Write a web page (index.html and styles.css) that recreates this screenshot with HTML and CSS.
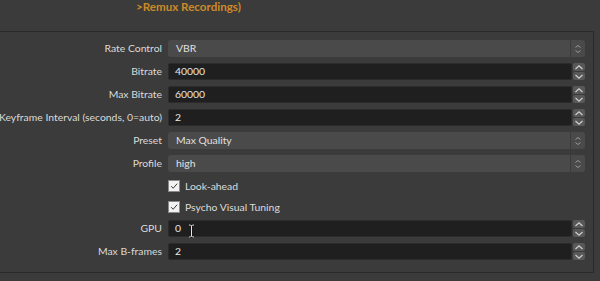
FILE: index.html
```html
<!DOCTYPE html>
<html>
<head>
<meta charset="utf-8">
<link rel="stylesheet" href="styles.css">
</head>
<body>
<div class="header"><span class="title">&gt;Remux Recordings)</span></div>
<div class="group">
  <div class="form">
    <div class="label"><span>Rate Control</span></div>
    <div class="combo"><div class="combo-text">VBR</div><div class="combo-btn"><svg width="8" height="10" viewBox="0 0 8 10"><path d="M1.5 3.5 L4 1.5 L6.5 3.5 M1.5 6.5 L4 8.5 L6.5 6.5" fill="none" stroke="#9a9a9a" stroke-width="1"/></svg></div></div>

    <div class="label"><span>Bitrate</span></div>
    <div class="spin"><div class="spin-text">40000</div><div class="spin-btns"><div class="sb"><svg width="10" height="7" viewBox="0 0 10 7"><path d="M1.5 5 L5 1.8 L8.5 5" fill="none" stroke="#d0d0d0" stroke-width="1.2"/></svg></div><div class="sb"><svg width="10" height="7" viewBox="0 0 10 7"><path d="M1.5 2 L5 5.2 L8.5 2" fill="none" stroke="#d0d0d0" stroke-width="1.2"/></svg></div></div></div>

    <div class="label"><span>Max Bitrate</span></div>
    <div class="spin"><div class="spin-text">60000</div><div class="spin-btns"><div class="sb"><svg width="10" height="7" viewBox="0 0 10 7"><path d="M1.5 5 L5 1.8 L8.5 5" fill="none" stroke="#d0d0d0" stroke-width="1.2"/></svg></div><div class="sb"><svg width="10" height="7" viewBox="0 0 10 7"><path d="M1.5 2 L5 5.2 L8.5 2" fill="none" stroke="#d0d0d0" stroke-width="1.2"/></svg></div></div></div>

    <div class="label"><span>Keyframe Interval (seconds, 0=auto)</span></div>
    <div class="spin"><div class="spin-text">2</div><div class="spin-btns"><div class="sb"><svg width="10" height="7" viewBox="0 0 10 7"><path d="M1.5 5 L5 1.8 L8.5 5" fill="none" stroke="#d0d0d0" stroke-width="1.2"/></svg></div><div class="sb"><svg width="10" height="7" viewBox="0 0 10 7"><path d="M1.5 2 L5 5.2 L8.5 2" fill="none" stroke="#d0d0d0" stroke-width="1.2"/></svg></div></div></div>

    <div class="label"><span>Preset</span></div>
    <div class="combo"><div class="combo-text">Max Quality</div><div class="combo-btn"><svg width="8" height="10" viewBox="0 0 8 10"><path d="M1.5 3.5 L4 1.5 L6.5 3.5 M1.5 6.5 L4 8.5 L6.5 6.5" fill="none" stroke="#9a9a9a" stroke-width="1"/></svg></div></div>

    <div class="label"><span>Profile</span></div>
    <div class="combo"><div class="combo-text">high</div><div class="combo-btn"><svg width="8" height="10" viewBox="0 0 8 10"><path d="M1.5 3.5 L4 1.5 L6.5 3.5 M1.5 6.5 L4 8.5 L6.5 6.5" fill="none" stroke="#9a9a9a" stroke-width="1"/></svg></div></div>

    <div class="label"></div>
    <div class="check"><div class="box"><svg width="12" height="12" viewBox="0 0 12 12"><path d="M2.5 6.2 L5 8.7 L9.8 3.2" fill="none" stroke="#3a3a3a" stroke-width="1.2"/></svg></div><span>Look-ahead</span></div>

    <div class="label"></div>
    <div class="check"><div class="box"><svg width="12" height="12" viewBox="0 0 12 12"><path d="M2.5 6.2 L5 8.7 L9.8 3.2" fill="none" stroke="#3a3a3a" stroke-width="1.2"/></svg></div><span>Psycho Visual Tuning</span></div>

    <div class="label"><span>GPU</span></div>
    <div class="spin"><div class="spin-text">0</div><div class="spin-btns"><div class="sb"><svg width="10" height="7" viewBox="0 0 10 7"><path d="M1.5 5 L5 1.8 L8.5 5" fill="none" stroke="#d0d0d0" stroke-width="1.2"/></svg></div><div class="sb"><svg width="10" height="7" viewBox="0 0 10 7"><path d="M1.5 2 L5 5.2 L8.5 2" fill="none" stroke="#d0d0d0" stroke-width="1.2"/></svg></div></div>
      <svg class="ibeam" width="7" height="14" viewBox="0 0 7 14"><path d="M1 1 H2.5 L3.5 2 L4.5 1 H6 M3.5 2 V12 M1 13 H2.5 L3.5 12 L4.5 13 H6" fill="none" stroke="#111" stroke-width="2"/><path d="M1 1 H2.5 L3.5 2 L4.5 1 H6 M3.5 2 V12 M1 13 H2.5 L3.5 12 L4.5 13 H6" fill="none" stroke="#e8e8e8" stroke-width="1"/></svg>
    </div>

    <div class="label"><span>Max B-frames</span></div>
    <div class="spin"><div class="spin-text">2</div><div class="spin-btns"><div class="sb"><svg width="10" height="7" viewBox="0 0 10 7"><path d="M1.5 5 L5 1.8 L8.5 5" fill="none" stroke="#d0d0d0" stroke-width="1.2"/></svg></div><div class="sb"><svg width="10" height="7" viewBox="0 0 10 7"><path d="M1.5 2 L5 5.2 L8.5 2" fill="none" stroke="#d0d0d0" stroke-width="1.2"/></svg></div></div></div>
  </div>
</div>
</body>
</html>
```
FILE: styles.css
```css
html, body {
  margin: 0;
  padding: 0;
  background: #3b3b3b;
  width: 600px;
  height: 281px;
  overflow: hidden;
  font-family: Lato, "Noto Sans", sans-serif;
  font-size: 10.4px;
  color: #dcdcdc;
}
.header {
  height: 31px;
  box-sizing: border-box;
  padding-left: 136px;
  line-height: 13px;
}
.title {
  color: #cc8a26;
  font-weight: bold;
  font-size: 11.6px;
}
.group {
  margin-left: -4px;
  width: 598px;
  height: 242px;
  box-sizing: border-box;
  border: 1px solid #2a2a2a;
  border-left: none;
  padding: 8px 8px 0 0;
}
.form {
  display: grid;
  grid-template-columns: 166px 1fr;
  column-gap: 6px;
  row-gap: 6px;
  grid-template-rows: 17px 17px 17px 17px 17px 17px 15px 15px 17px 17px;
}
.label {
  display: flex;
  justify-content: flex-end;
  white-space: nowrap;
  line-height: 17px;
  color: #dadada;
  min-width: 0;
}
.label span { flex: none; }
.combo {
  display: flex;
  gap: 1px;
}
.combo-text {
  flex: 1;
  background: #4a4a4a;
  border-radius: 3px 0 0 3px;
  padding-left: 8px;
  line-height: 17px;
  color: #e0e0e0;
}
.combo-btn {
  width: 14px;
  background: #4a4a4a;
  border-radius: 0 3px 3px 0;
  display: flex;
  align-items: center;
  justify-content: center;
}
.spin {
  display: flex;
  gap: 1px;
  position: relative;
}
.spin-text {
  flex: 1;
  background: #1f1f1f;
  border: 1px solid #2b2b2b;
  border-radius: 2px;
  padding-left: 6px;
  line-height: 15px;
  color: #e8e8e8;
}
.spin-btns {
  width: 12px;
  display: flex;
  flex-direction: column;
  gap: 1px;
}
.sb {
  flex: 1;
  background: #585858;
  border-radius: 2px;
  display: flex;
  align-items: center;
  justify-content: center;
}
.check {
  display: flex;
  align-items: center;
  gap: 5px;
  color: #dcdcdc;
}
.box {
  width: 12px;
  height: 12px;
  background: #f2f2f2;
  border: 1px solid #8a8a8a;
  box-sizing: border-box;
  display: flex;
  align-items: center;
  justify-content: center;
}
.box svg { display: block; }
.ibeam {
  position: absolute;
  left: 20px;
  top: 4px;
}
```
